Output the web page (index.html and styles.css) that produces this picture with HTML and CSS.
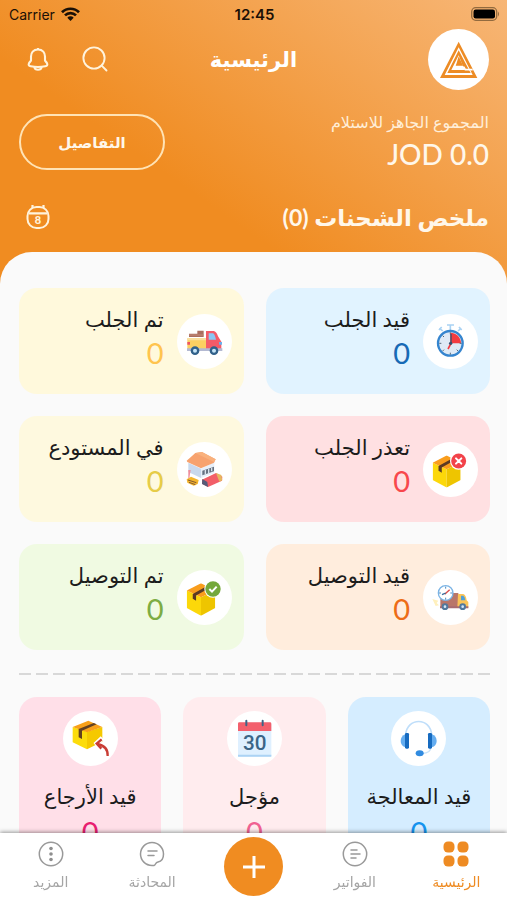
FILE: index.html
```html
<!DOCTYPE html>
<html lang="ar" dir="rtl">
<head>
<meta charset="utf-8">
<meta name="viewport" content="width=device-width, initial-scale=1">
<title>الرئيسية</title>
<link rel="stylesheet" href="styles.css">
</head>
<body>
<svg class="defs" aria-hidden="true">
  <symbol id="parcel" viewBox="0 0 86 98">
    <path d="M0 22 43 42V98L0 75Z" fill="#fcd80a"/>
    <path d="M86 22 43 42V98L86 75Z" fill="#eec500"/>
    <path d="M0 22 43 0 86 22 43 42Z" fill="#f99d1c"/>
    <path d="M18 32 60 9 69 14 28 37V53L18 47Z" fill="#5b3a24"/>
  </symbol>
</svg>
<div class="app">
  <div class="status" dir="ltr">
    <div class="carrier">Carrier
      <svg width="19" height="14" viewBox="0 0 19 14" aria-hidden="true"><g fill="none" stroke="#1b1006" stroke-width="2.7"><path d="M1 5.300a12 12 0 0 1 17 0"/><path d="M4 8.400a7.800 7.800 0 0 1 11 0"/></g><path d="M6.300 10.700a4.500 4.500 0 0 1 6.400 0L9.500 14Z" fill="#1b1006"/></svg>
    </div>
    <time>12:45</time>
    <svg class="battery" width="29" height="14" viewBox="0 0 29 14" aria-hidden="true"><rect x=".7" y=".7" width="25" height="12.600" rx="4" fill="none" stroke="#926a3e" stroke-width="1.300"/><rect x="2.500" y="2.500" width="21.500" height="9" rx="2.200" fill="#000"/><path d="M27 4.500q2 2.500 0 5Z" fill="#926a3e"/></svg>
  </div>

  <header class="topbar">
    <div class="avatar">
      <svg viewBox="0 0 183 183" aria-label="الشعار" role="img"><path d="M92 38 148 147H36ZM92 55 50 138H134Z" fill="#ed8c25" fill-rule="evenodd"/><path d="M92 64 128 132H58ZM92 79 70 123H111L103 107Z" fill="#ed8c25" fill-rule="evenodd"/><path d="M92 82 105 110H83L86 102Z" fill="#ed8c25"/><path d="M80 115H108L112 122H134" fill="none" stroke="#fff" stroke-width="5"/></svg>
    </div>
    <h1>الرئيسية</h1>
    <div class="actions">
      <button class="icon-button" aria-label="بحث"><svg width="26" height="26" viewBox="0 0 26 26"><g fill="none" stroke="#fff3dc" stroke-width="1.900" stroke-linecap="round"><circle cx="12" cy="12" r="10.600"/><path d="m19.700 19.700 4.800 4.800"/></g></svg></button>
      <button class="icon-button" aria-label="الإشعارات"><svg width="24" height="26" viewBox="0 0 24 26"><g fill="none" stroke="#fff3dc" stroke-width="2.100" stroke-linejoin="round"><path d="M12 3.500c-4.800 0-7 3.300-7 7v4L3.100 17c-1 1.700-.2 3 1.600 3.300 4.800 1 9.800 1 14.600 0 1.800-.3 2.600-1.600 1.600-3.300L19 14.500v-4c0-3.700-2.200-7-7-7Z"/><path d="M8.300 21c.7 3.600 6.700 3.600 7.400 0"/><path d="M12 2v2"/></g></svg></button>
    </div>
  </header>

  <section class="balance">
    <div>
      <p class="balance-label">المجموع الجاهز للاستلام</p>
      <p class="balance-amount" dir="ltr">JOD 0.0</p>
    </div>
    <button class="details">التفاصيل</button>
  </section>

  <div class="summary">
    <h2>ملخص الشحنات <span>(0)</span></h2>
    <button class="icon-button" aria-label="التاريخ"><svg width="24" height="26" viewBox="0 0 24 26"><g fill="none" stroke="#fff3dc" stroke-width="2"><rect x="1.500" y="3" width="21" height="21" rx="9"/><path d="M3 9.300h18M6.500 1v3M17.500 1v3" stroke-width="2.200"/></g><text x="12" y="20" text-anchor="middle" class="date-number">8</text></svg></button>
  </div>

  <main class="sheet">
    <div class="stats">
      <article class="stat blue">
        <svg class="badge" viewBox="0 0 165 165" aria-hidden="true"><g fill="none" stroke="#a9d2f3" stroke-width="5"><path d="M82 50V33M72 33H93M50 43l9 8M114 43l-9 8"/><path d="M48 48l8-9M108 39l8 9"/></g><circle cx="82" cy="88" r="37" fill="#dfeaf6" stroke="#3585cf" stroke-width="7"/><path d="M82 88V56A32 32 0 0 1 114 88Z" fill="#f33b41"/><g stroke="#55677a" stroke-width="3"><path d="M82 55v6M82 116v6M49 88h6M110 88h6M59 65l4 4M105 111l-4-4M59 111l4-4"/></g><path d="M84 60V88" stroke="#35506d" stroke-width="4"/><path d="M84 88 75 105" stroke="#f33b41" stroke-width="5"/><circle cx="83" cy="88" r="5" fill="#35506d"/></svg>
        <div><h3>قيد الجلب</h3><p class="count">0</p></div>
      </article>
      <article class="stat cream">
        <svg class="badge" viewBox="0 0 165 165" aria-hidden="true"><path d="M36 59H61V50H80V69H36Z" fill="#a96e60"/><path d="M36 63H80" stroke="#c58b78" stroke-width="3"/><path d="M31 73H88V109H31Z" fill="#fccf61"/><path d="M31 73H88V79H31Z" fill="#f8dfa0"/><path d="M87 51H110Q118 52 123 67L133 83V109H87Z" fill="#f45b68"/><path d="M95 58H108Q113 59 117 77H95Z" fill="#8bc7f3"/><path d="M30 103H136V111H30Z" fill="#b3b9d2"/><path d="M31 84h8v8h-8Z" fill="#ef5564"/><path d="M126 84h9v8h-9Z" fill="#6aaeed"/><g fill="#c6e5f8" stroke="#31618a" stroke-width="7"><circle cx="54" cy="110" r="9.500"/><circle cx="111" cy="110" r="9.500"/></g></svg>
        <div><h3>تم الجلب</h3><p class="count">0</p></div>
      </article>
      <article class="stat rose">
        <svg class="badge" viewBox="0 0 165 165" aria-hidden="true"><use href="#parcel" x="29" y="40" width="84" height="97"/><circle cx="107" cy="57" r="26" fill="#fff"/><circle cx="107" cy="57" r="22.500" fill="#f2434a"/><path d="m99 49 16 16M115 49 99 65" stroke="#fff" stroke-width="6" stroke-linecap="round"/></svg>
        <div><h3>تعذر الجلب</h3><p class="count">0</p></div>
      </article>
      <article class="stat sand">
        <svg class="badge" viewBox="0 0 165 165" aria-hidden="true"><path d="M34 62 72 80V108L34 90Z" fill="#c9d9ed"/><path d="M72 80 112 60V94L72 108Z" fill="#e8f0fa"/><path d="M29 56 55 33 75 30 116 52 111 62 72 79 31 60Z" fill="#f7a26e"/><path d="M55 33 75 30 116 52 111 60Z" fill="#f9b17d"/><path d="M76 86 111 74V88L76 100Z" fill="#667181"/><path d="M85 84v13M95 80v13M104 77v11" stroke="#d8e2ec" stroke-width="4"/><path d="M34 84H41L37 108H34Z" fill="#ef8d9b"/><path d="m29 112 13-8 23 10-3 12-12 5-19-9Z" fill="#f4b52c"/><path d="m33 114 25 8M36 121l19 7" stroke="#835832" stroke-width="3"/><path d="M75 113 117 93 136 104 135 116 93 135 75 125Z" fill="#f25e68"/><path d="m76 111 15 9 2 15-18-9Z" fill="#565b78"/><path d="m117 93 16 6 3 16-9 4Z" fill="#e6b65f"/></svg>
        <div><h3>في المستودع</h3><p class="count">0</p></div>
      </article>
      <article class="stat peach">
        <svg class="badge" viewBox="0 0 165 165" aria-hidden="true"><path d="M28 87 46 92 41 99 48 106 38 108Z" fill="#fff0bd"/><path d="M52 69H106V113H52Z" fill="#b97669"/><path d="M105 72H121Q129 75 131 91L136 96V113H103Z" fill="#fbc457"/><path d="M114 77H121Q126 80 127 91H114Z" fill="#4f9fd8"/><path d="M51 109H136V115H51Z" fill="#a86b70"/><g fill="#d4e6f8" stroke="#51799d" stroke-width="6"><circle cx="66" cy="110" r="7"/><circle cx="119" cy="110" r="7"/></g><circle cx="68" cy="69" r="22" fill="#fff" stroke="#7bb4e5" stroke-width="4"/><path d="M68 50v6M68 83v6M48 69h6M82 69h6" stroke="#4c8ac0" stroke-width="3"/><path d="m65 73 15-14" stroke="#d94c4b" stroke-width="4"/><path d="m57 74 11-5" stroke="#346b99" stroke-width="4"/></svg>
        <div><h3>قيد التوصيل</h3><p class="count">0</p></div>
      </article>
      <article class="stat green">
        <svg class="badge" viewBox="0 0 165 165" aria-hidden="true"><use href="#parcel" x="29" y="40" width="86" height="97"/><circle cx="108" cy="57" r="26" fill="#fff"/><circle cx="108" cy="57" r="23" fill="#74a83a"/><path d="m97 57 8 8 14-15" fill="none" stroke="#fff" stroke-width="6"/></svg>
        <div><h3>تم التوصيل</h3><p class="count">0</p></div>
      </article>
    </div>

    <hr class="divider">

    <div class="tiles">
      <article class="tile sky">
        <svg class="badge" viewBox="0 0 165 165" aria-hidden="true"><path d="M44 72C47 18 119 18 122 72" fill="none" stroke="#bfdefa" stroke-width="5"/><path d="M120 108Q119 127 94 127" fill="none" stroke="#c8e3fa" stroke-width="4"/><path d="M44 70Q29 75 29 90T44 109Z" fill="#64adf0"/><path d="M122 70Q137 75 137 90T122 109Z" fill="#64adf0"/><rect x="42" y="66" width="12" height="47" rx="4" fill="#176bc0"/><rect x="111" y="66" width="12" height="47" rx="4" fill="#176bc0"/><ellipse cx="86" cy="127" rx="12" ry="9" fill="#318be0"/></svg>
        <h3>قيد المعالجة</h3><p class="count">0</p>
      </article>
      <article class="tile blush">
        <svg class="badge" viewBox="0 0 165 165" aria-hidden="true"><rect x="33" y="35" width="100" height="102" rx="4" fill="#dff0ff"/><path d="M33 60V38q0-4 4-4H129q4 0 4 4V60Z" fill="#f3606d"/><path d="M33 131H133V137H33Z" fill="#acd3f4"/><path d="M58 29V43M107 29V43" stroke="#3b6587" stroke-width="6" stroke-linecap="round"/><text x="83" y="116" text-anchor="middle" class="calendar-number">30</text></svg>
        <h3>مؤجل</h3><p class="count">0</p>
      </article>
      <article class="tile pink">
        <svg class="badge" viewBox="0 0 165 165" aria-hidden="true"><path d="M29 48 72 62V115L29 94Z" fill="#fcdc0c"/><path d="M118 48 72 62V115L118 92Z" fill="#f5c900"/><path d="M29 48 76 29 118 48 72 64Z" fill="#f8a019"/><path d="M47 54 92 36 101 40 57 59V84L47 79Z" fill="#634020"/><path d="M134 136Q136 107 104 99" fill="none" stroke="#fff" stroke-width="16"/><path d="M118 81 101 97 117 117" fill="none" stroke="#fff" stroke-width="14"/><path d="M134 135Q136 106 103 99" fill="none" stroke="#c93d35" stroke-width="7"/><path d="M116 85 101 98 115 113" fill="none" stroke="#c93d35" stroke-width="7"/></svg>
        <h3>قيد الأرجاع</h3><p class="count">0</p>
      </article>
    </div>
  </main>

  <nav class="tabs">
    <a href="#" class="tab active" aria-current="page"><svg width="26" height="26" viewBox="0 0 26 26" aria-hidden="true"><g fill="#ee8b23"><rect x=".5" y=".5" width="11" height="11" rx="4.500"/><rect x="14.500" y=".5" width="11" height="11" rx="4.500"/><rect x=".5" y="14.500" width="11" height="11" rx="4.500"/><rect x="14.500" y="14.500" width="11" height="11" rx="4.500"/></g></svg>الرئيسية</a>
    <a href="#" class="tab"><svg width="26" height="26" viewBox="0 0 26 26" aria-hidden="true"><g fill="none" stroke="#999" stroke-width="1.500" stroke-linecap="round"><circle cx="13" cy="13" r="11.700"/><path d="M9 9h6M9 13h9M9 17h5"/></g></svg>الفواتير</a>
    <button class="add" aria-label="إضافة"><svg width="24" height="24" viewBox="0 0 24 24"><path d="M12 1v22M1 12h22" stroke="#fff" stroke-width="3"/></svg></button>
    <a href="#" class="tab"><svg width="26" height="26" viewBox="0 0 26 26" aria-hidden="true"><g fill="none" stroke="#999" stroke-width="1.500" stroke-linecap="round" stroke-linejoin="round"><path d="M15 24.500C17 24 16 21.500 19 21c4-.6 5.500-3 5.500-8A11.500 11.500 0 1 0 13 24.500Z"/><path d="M9 10h9M9 14.500h6"/></g></svg>المحادثة</a>
    <a href="#" class="tab"><svg width="26" height="26" viewBox="0 0 26 26" aria-hidden="true"><circle cx="13" cy="13" r="11.700" fill="none" stroke="#999" stroke-width="1.500"/><g fill="#8e8e8e"><circle cx="13" cy="7.500" r="1.800"/><circle cx="13" cy="13" r="1.800"/><circle cx="13" cy="18.500" r="1.800"/></g></svg>المزيد</a>
  </nav>
</div>
</body>
</html>
```

FILE: styles.css
```css
* {
  box-sizing: border-box;
}

body,
h1,
h2,
h3,
p {
  margin: 0;
}

body {
  font-family: Lato, "DejaVu Sans", sans-serif;
  color: #1c1c1c;
}

button {
  font: inherit;
  color: inherit;
  border: 0;
  padding: 0;
  background: none;
}

svg {
  display: block;
}

.defs {
  position: absolute;
  width: 0;
  height: 0;
}

.app {
  display: flex;
  flex-direction: column;
  height: 100vh;
  overflow: hidden;
  background: #f08c21 linear-gradient(35deg, #f08c21 36%, #f7b676 100%) top / 100% 290px no-repeat;
}

.status {
  display: grid;
  grid-template-columns: 1fr auto 1fr;
  align-items: center;
  height: 28px;
  flex: none;
  padding: 0 7px 0 9px;
  font-family: Inter, sans-serif;
  font-size: 14px;
  color: #1b1006;
}

.status time {
  font-size: 15px;
  font-weight: 600;
}

.carrier {
  display: flex;
  align-items: center;
  gap: 6px;
}

.battery {
  justify-self: end;
}

.topbar {
  display: grid;
  grid-template-columns: 1fr auto 1fr;
  align-items: center;
  flex: none;
  height: 62px;
  padding: 0 18px;
  color: #fff;
}

.avatar {
  width: 61px;
  height: 61px;
  border-radius: 50%;
  background: #fff;
}

.topbar h1 {
  font-size: 21px;
  line-height: 32px;
}

.actions {
  display: flex;
  justify-content: flex-end;
  gap: 32px;
  padding-left: 8px;
}

.balance {
  display: flex;
  justify-content: space-between;
  align-items: center;
  flex: none;
  height: 104px;
  padding: 0 18px 0 19px;
  color: #fff7ea;
}

.balance-label {
  font-size: 16px;
  line-height: 24px;
  color: #ffeed8;
}

.balance-amount {
  font-size: 28px;
  font-weight: 500;
  line-height: 40px;
  text-align: right;
}

.details {
  width: 146px;
  height: 56px;
  border: 2px solid #ffe3b5;
  border-radius: 28px;
  font-size: 15px;
  font-weight: bold;
}

.summary {
  display: flex;
  justify-content: space-between;
  align-items: center;
  flex: none;
  height: 58px;
  padding: 0 18px 12px 26px;
  color: #fff7ea;
}

.summary h2 {
  font-size: 23px;
  line-height: 32px;
}

.date-number {
  font-size: 11px;
  font-weight: 900;
  fill: #fff3dc;
}

.sheet {
  flex: 1;
  min-height: 0;
  overflow: hidden auto;
  scrollbar-width: none;
  padding: 36px 17px 0 19px;
  border-radius: 32px 32px 0 0;
  background: #fafafa;
}

.stats {
  display: grid;
  grid-template-columns: 1fr 1fr;
  gap: 22px;
}

.stat {
  display: flex;
  align-items: center;
  gap: 13px;
  height: 106px;
  padding: 0 12px;
  border-radius: 18px;
}

.badge {
  flex: none;
  width: 55px;
  height: 55px;
  border-radius: 50%;
  background: #fff;
}

.stat h3,
.tile h3 {
  font-size: 21px;
  font-weight: normal;
  line-height: 32px;
  white-space: nowrap;
}

.count {
  font-size: 29px;
  line-height: 36px;
}

.stat > div {
  padding-bottom: 8px;
}

.blue { background: #e1f3ff; }
.cream { background: #fff9dc; }
.rose { background: #ffe0e2; }
.sand { background: #fef9df; }
.peach { background: #ffeddd; }
.green { background: #f0fae2; }
.sky { background: #d5edff; }
.blush { background: #ffecee; }
.pink { background: #ffdfe8; }

.blue .count { color: #1769b5; }
.cream .count { color: #ffc44e; }
.rose .count { color: #f8474c; }
.sand .count { color: #e6cc48; }
.peach .count { color: #ed6c16; }
.green .count { color: #7dac43; }
.sky .count { color: #1593ee; }
.blush .count { color: #f06292; }
.pink .count { color: #e81e70; }

.divider {
  height: 2px;
  margin: 23px 0 22px;
  border: 0;
  background: repeating-linear-gradient(to right, #d8d8d8 0 12px, transparent 12px 17px);
}

.tiles {
  display: grid;
  grid-template-columns: repeat(3, 1fr);
  gap: 22px;
}

.tile {
  display: flex;
  flex-direction: column;
  align-items: center;
  padding: 14px 0 20px;
  border-radius: 18px;
}

.tile h3 {
  margin: 14px 0 2px;
}

.calendar-number {
  font-family: Roboto, sans-serif;
  font-size: 62px;
  font-weight: 500;
  fill: #3b6587;
}

.tabs {
  position: relative;
  display: grid;
  grid-template-columns: repeat(5, 1fr);
  align-items: center;
  justify-items: center;
  flex: none;
  height: 67px;
  background: #fff;
  box-shadow: 0 -1px 4px rgba(0, 0, 0, 0.4);
}

.tab {
  display: flex;
  flex-direction: column;
  align-items: center;
  gap: 5px;
  font-size: 14px;
  line-height: 20px;
  color: #a5a5a5;
  text-decoration: none;
}

.tab.active {
  color: #ee8b23;
}

.add {
  display: grid;
  place-items: center;
  width: 59px;
  height: 59px;
  border-radius: 50%;
  background: #f08c21;
}
```
